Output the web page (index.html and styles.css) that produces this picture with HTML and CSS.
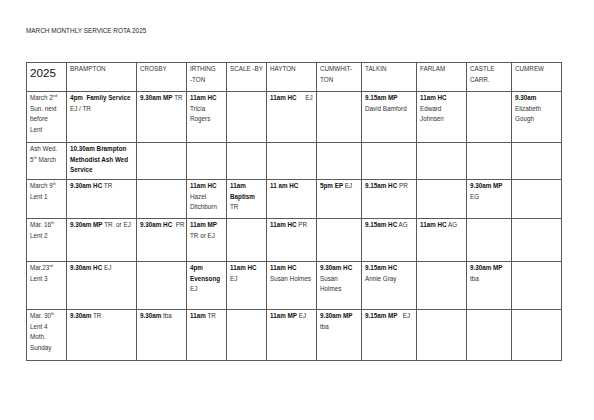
FILE: index.html
```html
<!DOCTYPE html>
<html lang="en">
<head>
<meta charset="utf-8">
<title>March Monthly Service Rota 2025</title>
<link rel="stylesheet" href="styles.css">
</head>
<body>
<div class="page">
  <div class="title">MARCH MONTHLY SERVICE ROTA 2025</div>
  <table class="rota">
    <colgroup>
      <col class="c-date"><col class="c-bram"><col class="c-cros"><col class="c-irth"><col class="c-scal"><col class="c-hayt"><col class="c-cumw"><col class="c-talk"><col class="c-farl"><col class="c-cast"><col class="c-cumr">
    </colgroup>
    <tr class="r-head">
      <td class="year">2025</td>
      <td>BRAMPTON</td>
      <td>CROSBY</td>
      <td>IRTHING<br>-TON</td>
      <td>SCALE -BY</td>
      <td>HAYTON</td>
      <td>CUMWHIT-<br>TON</td>
      <td>TALKIN</td>
      <td>FARLAM</td>
      <td>CASTLE<br>CARR.</td>
      <td>CUMREW</td>
    </tr>
    <tr class="r1">
      <td>March 2<sup>nd</sup><br>Sun. next<br>before<br>Lent</td>
      <td><b>4pm&nbsp; Family Service</b><br>EJ / TR</td>
      <td><b>9.30am MP</b> TR</td>
      <td><b>11am HC</b><br>Tricia<br>Rogers</td>
      <td></td>
      <td><b>11am HC</b>&nbsp;&nbsp;&nbsp;&nbsp; EJ</td>
      <td></td>
      <td><b>9.15am MP</b><br>David Bamford</td>
      <td><b>11am HC</b><br>Edward<br>Johnsen</td>
      <td></td>
      <td><b>9.30am</b><br>Elizabeth<br>Gough</td>
    </tr>
    <tr class="r2">
      <td>Ash Wed.<br>5<sup>th</sup> March</td>
      <td><b>10.30am Brampton<br>Methodist Ash Wed<br>Service</b></td>
      <td></td><td></td><td></td><td></td><td></td><td></td><td></td><td></td><td></td>
    </tr>
    <tr class="r3">
      <td>March 9<sup>th</sup><br>Lent 1</td>
      <td><b>9.30am HC</b> TR</td>
      <td></td>
      <td><b>11am HC</b><br>Hazel<br>Ditchburn</td>
      <td><b>11am<br>Baptism</b><br>TR</td>
      <td><b>11 am HC</b></td>
      <td><b>5pm EP</b> EJ</td>
      <td><b>9.15am HC</b> PR</td>
      <td></td>
      <td><b>9.30am MP</b><br>EG</td>
      <td></td>
    </tr>
    <tr class="r4">
      <td>Mar. 16<sup>th</sup><br>Lent 2</td>
      <td><b>9.30am MP</b> TR&nbsp; or EJ</td>
      <td><b>9.30am HC</b>&nbsp; PR</td>
      <td><b>11am MP</b><br>TR or EJ</td>
      <td></td>
      <td><b>11am HC</b> PR</td>
      <td></td>
      <td><b>9.15am HC</b> AG</td>
      <td><b>11am HC</b> AG</td>
      <td></td>
      <td></td>
    </tr>
    <tr class="r5">
      <td>Mar.23<sup>rd</sup><br>Lent 3</td>
      <td><b>9.30am HC</b> EJ</td>
      <td></td>
      <td><b>4pm<br>Evensong</b><br>EJ</td>
      <td><b>11am HC</b><br>EJ</td>
      <td><b>11am HC</b><br>Susan Holmes</td>
      <td><b>9.30am HC</b><br>Susan<br>Holmes</td>
      <td><b>9.15am HC</b><br>Annie Gray</td>
      <td></td>
      <td><b>9.30am MP</b><br>tba</td>
      <td></td>
    </tr>
    <tr class="r6">
      <td>Mar. 30<sup>th</sup><br>Lent 4<br>Moth.<br>Sunday</td>
      <td><b>9.30am</b> TR</td>
      <td><b>9.30am</b> tba</td>
      <td><b>11am</b> TR</td>
      <td></td>
      <td><b>11am MP</b> EJ</td>
      <td><b>9.30am MP</b><br>tba</td>
      <td><b>9.15am MP</b>&nbsp;&nbsp; EJ</td>
      <td></td>
      <td></td>
      <td></td>
    </tr>
  </table>
</div>
</body>
</html>
```
FILE: styles.css
```css
html, body {
  margin: 0;
  padding: 0;
  background: #ffffff;
}

.page {
  padding: 26px 0 0 26px;
  font-family: "Liberation Sans", Arial, sans-serif;
  color: #1e1e1e;
}

.title {
  font-size: 6.4px;
  line-height: 10px;
  margin-bottom: 26px;
  white-space: nowrap;
}

.rota {
  border-collapse: collapse;
  table-layout: fixed;
  width: 535px;
  font-size: 6.3px;
  line-height: 10.6px;
}

.rota td {
  border: 1px solid #5a5a5a;
  vertical-align: top;
  padding: 1px 3px 0 3px;
  white-space: nowrap;
  overflow: hidden;
  color: #333;
}

.rota b {
  color: #111;
  font-weight: bold;
}

.rota sup {
  font-size: 4px;
  line-height: 0;
  vertical-align: 3px;
}

.rota td.year {
  font-size: 11.7px;
  line-height: 16px;
  padding-top: 2px;
  color: #111;
}

.c-date { width: 40px; }
.c-bram { width: 70px; }
.c-cros { width: 50px; }
.c-irth { width: 40px; }
.c-scal { width: 40px; }
.c-hayt { width: 50px; }
.c-cumw { width: 45px; }
.c-talk { width: 55px; }
.c-farl { width: 50px; }
.c-cast { width: 45px; }
.c-cumr { width: 50px; }

.r-head { height: 29px; }
.r1 { height: 51px; }
.r2 { height: 37px; }
.r3 { height: 39px; }
.r4 { height: 43px; }
.r5 { height: 48px; }
.r6 { height: 51px; }
```
